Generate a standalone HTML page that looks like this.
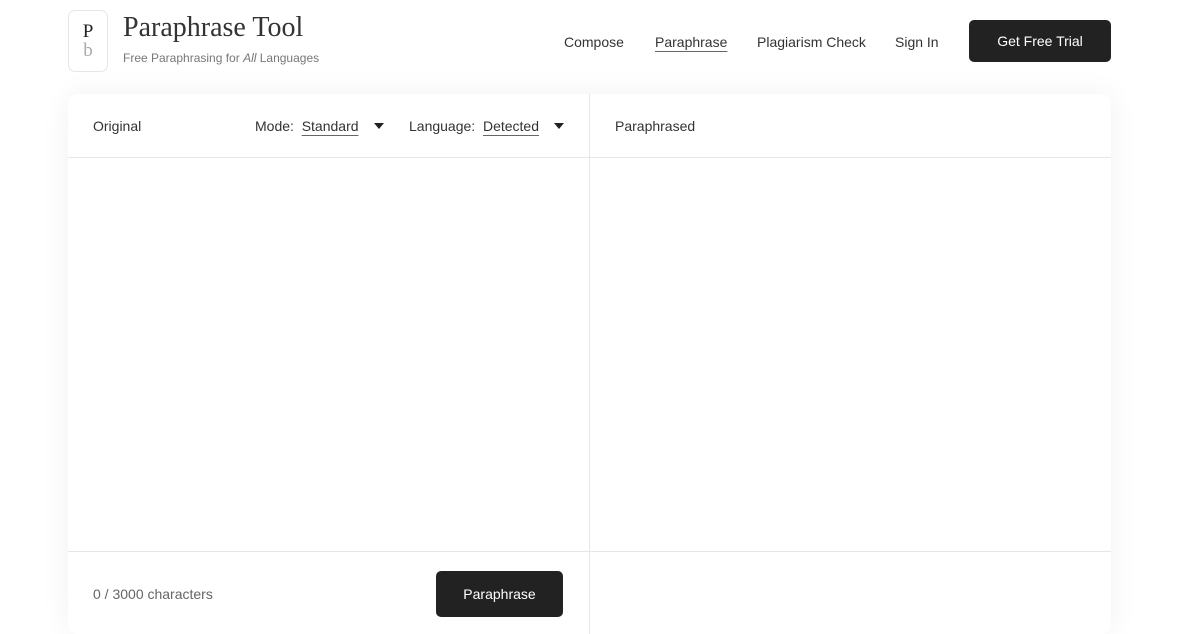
<!DOCTYPE html>
<html><head><meta charset="utf-8"><style>
*{box-sizing:border-box;margin:0;padding:0}
body{width:1200px;height:630px;background:#fff;font-family:"Liberation Sans",sans-serif;color:#222;position:relative;overflow:hidden}
.logo{position:absolute;left:68px;top:10px;width:40px;height:62px;border:1px solid #e6e6e6;border-radius:7px;text-align:center;font-family:"Liberation Serif",serif;font-size:19px;line-height:19px;padding-top:11px}
.logo span{display:block;color:#aaa}
.title{position:absolute;left:123px;top:12px;font-family:"Liberation Serif",serif;font-size:28px;color:#333}
.sub{position:absolute;left:123px;top:51px;font-size:12px;color:#777}
.nav{position:absolute;top:34px;font-size:14px;color:#333}
.btn{position:absolute;background:#222;color:#fff;border-radius:5px;font-size:14px;display:flex;align-items:center;justify-content:center}
.card{position:absolute;left:68px;top:94px;width:1043px;height:540px;background:#fff;border-radius:10px;box-shadow:0 0 30px rgba(0,0,0,0.06)}
.vl{position:absolute;left:521px;top:0;width:1px;height:540px;background:#e6e6e6}
.hl{position:absolute;left:0;width:1043px;height:1px;background:#e6e6e6}
.t{position:absolute;font-size:14px;color:#333}
.u{text-decoration:underline;text-underline-offset:4px;text-decoration-color:#666}
.tri{position:absolute;width:0;height:0;border-left:5px solid transparent;border-right:5px solid transparent;border-top:6px solid #222}
</style></head><body>
<div class="logo">P<span>b</span></div>
<div class="title">Paraphrase Tool</div>
<div class="sub">Free Paraphrasing for <i>All</i> Languages</div>
<div class="nav" style="left:564px">Compose</div>
<div class="nav u" style="left:655px">Paraphrase</div>
<div class="nav" style="left:757px">Plagiarism Check</div>
<div class="nav" style="left:895px">Sign In</div>
<div class="btn" style="left:969px;top:20px;width:142px;height:42px">Get Free Trial</div>
<div class="card">
<div class="vl"></div>
<div class="hl" style="top:63px"></div>
<div class="hl" style="top:457px"></div>
<div class="t" style="left:25px;top:24px">Original</div>
<div class="t" style="left:187px;top:24px">Mode:&nbsp; <span class="u">Standard</span></div>
<div class="tri" style="left:306px;top:29px"></div>
<div class="t" style="left:341px;top:24px">Language:&nbsp; <span class="u">Detected</span></div>
<div class="tri" style="left:486px;top:29px"></div>
<div class="t" style="left:547px;top:24px">Paraphrased</div>
<div class="t" style="left:25px;top:492px;color:#666">0 / 3000 characters</div>
<div class="btn" style="left:368px;top:477px;width:127px;height:46px">Paraphrase</div>
</div>
</body></html>
